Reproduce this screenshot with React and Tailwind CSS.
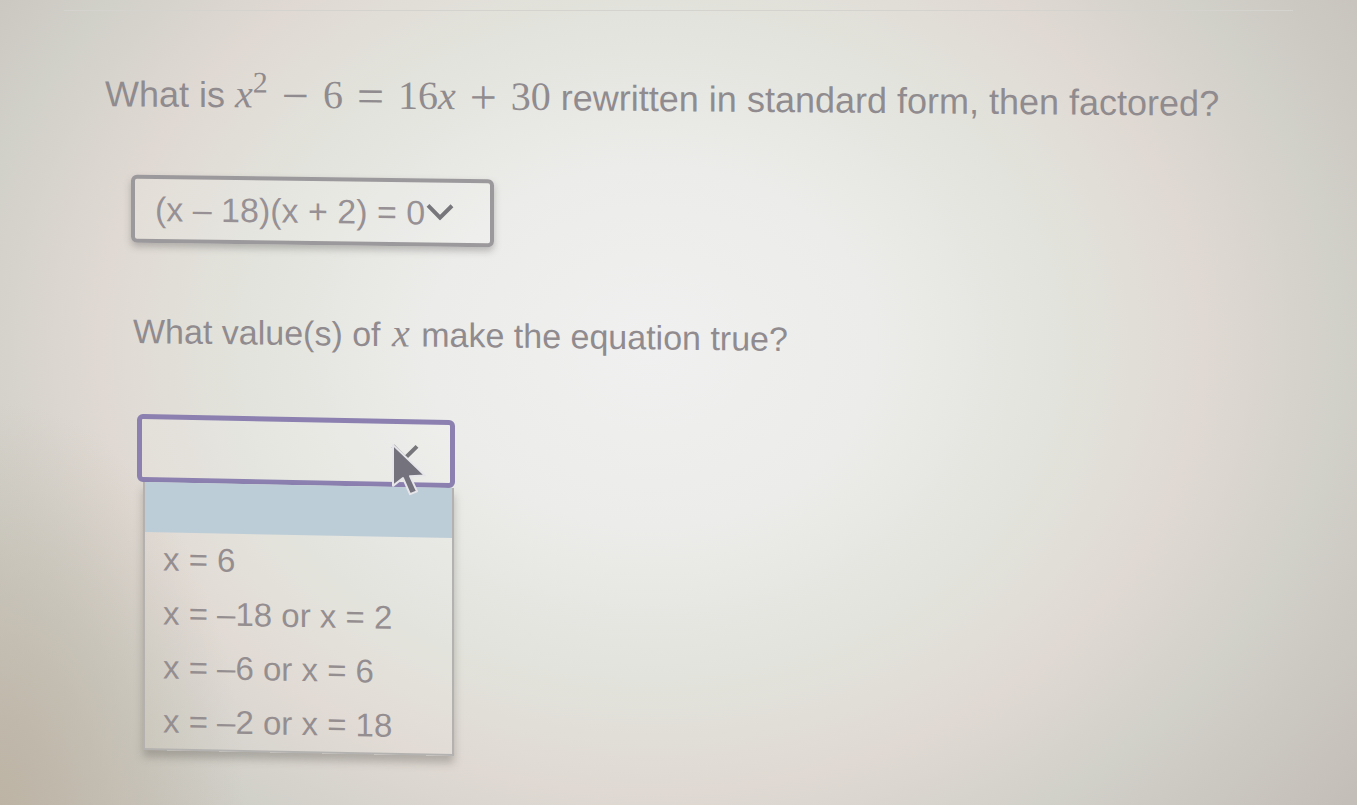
import React, { useState } from "react";

const FACTORED_OPTIONS = [
  "(x – 18)(x + 2) = 0",
  "(x + 18)(x – 2) = 0",
  "(x – 6)(x – 6) = 0",
];

const VALUE_OPTIONS = [
  "",
  "x = 6",
  "x = –18 or x = 2",
  "x = –6 or x = 6",
  "x = –2 or x = 18",
];

function MathVar({ children }) {
  return (
    <i className="font-['Liberation_Serif',serif] text-[40px] leading-none">
      {children}
    </i>
  );
}

function Operator({ children }) {
  return (
    <span className="mx-[14px] align-[-4px] text-[48px] leading-none">
      {children}
    </span>
  );
}

function Chevron() {
  return (
    <svg viewBox="0 0 28 18" className="h-[18px] w-7" fill="none" aria-hidden="true">
      <path d="M2 3 L14 15 L26 3" stroke="#77767a" strokeWidth="4" />
    </svg>
  );
}

function Pointer() {
  return (
    <svg viewBox="0 0 40 56" className="h-14 w-10" aria-hidden="true">
      <path
        d="M4 4 L4 45 L14 37 L21 53 L28 50 L21 35 L36 34 Z"
        fill="#74737d"
        stroke="#e6e6ea"
        strokeWidth="2"
        strokeLinejoin="round"
      />
    </svg>
  );
}

// first drop-down, closed
function FactoredSelect() {
  const [value, setValue] = useState(FACTORED_OPTIONS[0]);

  return (
    <div className="relative w-[363px] skew-y-[0.7deg]">
      <select
        aria-label="Factored equation"
        value={value}
        onChange={(e) => setValue(e.target.value)}
        className="h-[68px] w-full appearance-none rounded-md border-4 border-[#9c999c] bg-white/10 pl-5 text-[34px] text-[#979094] shadow-[0_4px_7px_rgba(90,85,85,0.35)] outline-none"
      >
        {FACTORED_OPTIONS.map((option) => (
          <option key={option}>{option}</option>
        ))}
      </select>
      <span className="pointer-events-none absolute top-6 right-10">
        <Chevron />
      </span>
    </div>
  );
}

// second drop-down, open with its list
function ValueSelect() {
  const [value, setValue] = useState("");

  return (
    <div className="relative w-[318px] skew-y-[1.1deg]">
      <select
        aria-label="Values of x"
        value={value}
        onChange={(e) => setValue(e.target.value)}
        className="block h-[68px] w-full appearance-none rounded-md border-5 border-[#8b80b0] bg-white/10 pl-5 text-[33px] text-[#979094] outline-none"
      >
        {VALUE_OPTIONS.map((option) => (
          <option key={option}>{option}</option>
        ))}
      </select>
      <span className="pointer-events-none absolute top-6 right-9">
        <Chevron />
      </span>
      <ul
        role="listbox"
        aria-label="Values of x"
        className="mr-px ml-1.5 border-x-2 border-b-2 border-[#b4b2b0] bg-white/5 text-[33px] leading-[54px] text-[#958e90] shadow-[0_7px_8px_rgba(90,85,80,0.35)]"
      >
        {VALUE_OPTIONS.map((option) => (
          <li
            key={option}
            role="option"
            aria-selected={option === value}
            onClick={() => setValue(option)}
            className={`min-h-[50px] cursor-pointer px-[18px] ${
              option === value ? "bg-[#bdcdd7]" : ""
            }`}
          >
            {option}
          </li>
        ))}
      </ul>
      <span className="pointer-events-none absolute top-[22px] right-[26px]">
        <Pointer />
      </span>
    </div>
  );
}

export default function App() {
  return (
    <main className="min-h-screen overflow-hidden bg-[#dedcd6] bg-[radial-gradient(ellipse_18%_50%_at_0%_100%,#bdb4a5_0%,#bdb4a500_100%),radial-gradient(ellipse_55%_75%_at_48%_43%,#f0f0f0_0%,#ececea_30%,#e2e3dc_55%,#e0d9d3_74%,#d1d0c9_92%,#c4beb8_120%)] pt-[10px] font-['Liberation_Sans',sans-serif] text-[#908b8e]">
      <div className="mx-16 border-t border-[#d5d3ce]" />
      <div className="flex flex-col items-start pt-[60px] pl-[105px]">
        <p className="skew-y-[0.5deg] text-[36px] leading-[56px] whitespace-nowrap">
          What is{" "}
          <span className="font-['Liberation_Serif',serif] text-[40px] leading-none">
            <MathVar>x</MathVar>
            <sup className="text-[30px]">2</sup>
            <Operator>−</Operator>6<Operator>=</Operator>16
            <MathVar>x</MathVar>
            <Operator>+</Operator>30
          </span>{" "}
          rewritten in standard form, then factored?
        </p>
        <div className="mt-[50px] ml-[26px]">
          <FactoredSelect />
        </div>
        <p className="mt-16 ml-7 skew-y-[0.7deg] text-[34px] leading-[52px] whitespace-nowrap">
          What value(s) of{" "}
          <span className="mx-0.5">
            <MathVar>x</MathVar>
          </span>{" "}
          make the equation true?
        </p>
        <div className="mt-14 ml-8">
          <ValueSelect />
        </div>
      </div>
    </main>
  );
}
